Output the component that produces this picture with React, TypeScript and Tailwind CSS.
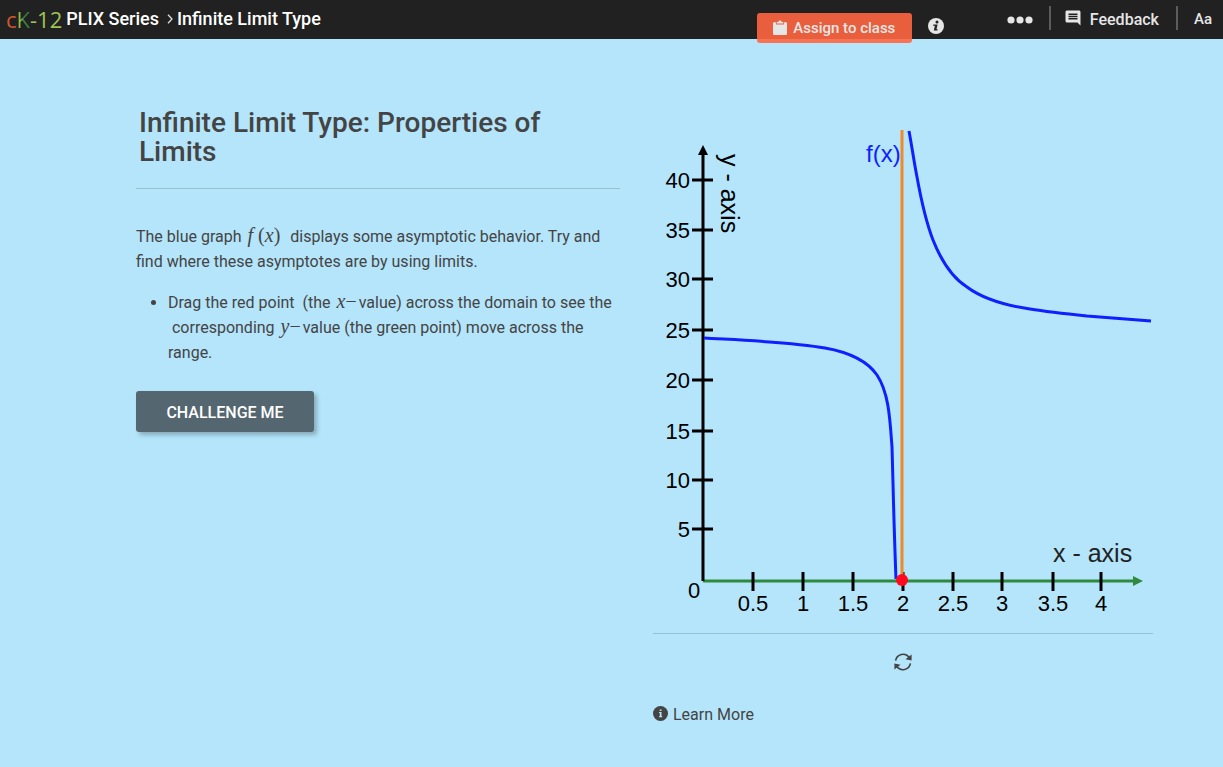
import { MdComment } from 'react-icons/md';

// Tick marks: label, position on the axis
const xTicks = [
    { label: '0.5', x: 100 },
    { label: '1', x: 150 },
    { label: '1.5', x: 200 },
    { label: '2', x: 250 },
    { label: '2.5', x: 300 },
    { label: '3', x: 349 },
    { label: '3.5', x: 400 },
    { label: '4', x: 448 },
];

const yTicks = [
    { label: '40', y: 50 },
    { label: '35', y: 100 },
    { label: '30', y: 149 },
    { label: '25', y: 200 },
    { label: '20', y: 250 },
    { label: '15', y: 301 },
    { label: '10', y: 350 },
    { label: '5', y: 399 },
];

function ClipboardIcon() {
    return (
        <svg viewBox="0 0 14 16" className="h-4 w-3.5" fill="currentColor" aria-hidden="true">
            <path d="M1 2.2h1.9v2.2h8.2V2.2H13a1 1 0 0 1 1 1V14a1 1 0 0 1-1 1H1a1 1 0 0 1-1-1V3.2a1 1 0 0 1 1-1z" />
            <path d="M3.7 3.6V2h1.5a1.85 1.85 0 0 1 3.6 0h1.5v1.6z" />
        </svg>
    );
}

function InfoIcon() {
    return (
        <svg viewBox="0 0 16 16" className="h-4 w-4" aria-hidden="true">
            <circle cx="8" cy="8" r="8" fill="#e6e6e6" />
            <circle cx="9" cy="4" r="1.5" fill="#212121" />
            <path d="M5.4 6.6h4.2L8.5 11.3h1.2l-.3 1.2H5.8l1.1-4.7H5.1z" fill="#212121" />
        </svg>
    );
}

function LearnMoreIcon() {
    return (
        <svg viewBox="0 0 15 15" className="h-[15px] w-[15px]" aria-hidden="true">
            <circle cx="7.5" cy="7.5" r="7.5" fill="#444" />
            <path d="M6.7 3.4h1.8v1.7H6.7zM6 6h2.5v4.3h.8v1H6v-1h.8V7H6z" fill="#b4e5fb" />
        </svg>
    );
}

function ResetIcon() {
    return (
        <svg viewBox="0 0 18 18" className="h-[18px] w-[18px]" aria-hidden="true">
            <path d="M1.6 7.6a7.6 7.6 0 0 1 13.6-3.2M16.4 10.4a7.6 7.6 0 0 1-13.6 3.2" fill="none" stroke="#444" strokeWidth="1.6" />
            <path d="M17.6 1.6v6l-6.2-1.4zM.4 16.4v-6l6.2 1.4z" fill="#444" />
        </svg>
    );
}

function Header() {
    return (
        <header className="flex h-[39px] items-start bg-[#212121] text-[#e6e6e6]">
            <nav aria-label="Breadcrumb" className="flex h-[38px] items-center pl-[6px] text-lg font-medium text-white">
                <a href="#" className="mr-1 font-[Open_Sans,sans-serif] text-[22px] font-normal text-[#9cc455]">
                    <span className="text-[#d2562e]">c</span>
                    <span className="bg-linear-to-r from-[#8fbf4d] from-30% to-[#3a8040] to-50% bg-clip-text text-transparent">K</span>
                    -12
                </a>
                <a href="#">PLIX Series</a>
                <svg viewBox="0 0 6 10" className="mr-1 ml-2 h-2.5 w-1.5" fill="none" stroke="#ddd" strokeWidth="1.3" aria-hidden="true">
                    <path d="M1 .7 5 5 1 9.3" />
                </svg>
                <span>Infinite Limit Type</span>
            </nav>

            <div className="ml-auto flex items-start">
                <button type="button" className="mt-[13px] flex h-[30px] w-[155px] items-center justify-center gap-1.5 rounded-[3px] bg-[#ff6640]/90 text-[15px] font-medium">
                    <ClipboardIcon />
                    Assign to class
                </button>
                <button type="button" aria-label="Information" className="mt-[18px] ml-4">
                    <InfoIcon />
                </button>
                <button type="button" aria-label="More" className="mt-4 ml-[63px]">
                    <svg viewBox="0 0 26 8" className="h-2 w-[26px]" fill="currentColor" aria-hidden="true">
                        <circle cx="4" cy="4" r="3.6" />
                        <circle cx="13" cy="4" r="3.6" />
                        <circle cx="22" cy="4" r="3.6" />
                    </svg>
                </button>
                <button type="button" className="mt-1.5 ml-4 flex h-6 items-center gap-2 border-l-2 border-[#5c5c5c] pl-[13px] font-medium">
                    <MdComment className="h-[18px] w-[18px]" />
                    <span className="pt-1">Feedback</span>
                </button>
                <button type="button" className="mt-1.5 mr-[11px] ml-[17px] h-6 border-l-2 border-[#5c5c5c] pt-0.5 pl-4 text-[15px] font-medium">
                    Aa
                </button>
            </div>
        </header>
    );
}

function Graph() {
    return (
        <svg viewBox="0 0 500 490" className="block w-full font-[Liberation_Sans,Arial,sans-serif]" role="img" aria-label="Graph of f(x)">
            {/* x axis */}
            <path d="M50 451H482" stroke="#2e8b3e" strokeWidth="3" />
            <path d="M480 446v10l10-5z" fill="#2e8b3e" />
            {xTicks.map(t => (
                <g key={t.label}>
                    <path d={`M${t.x} 442v19`} stroke="#000" strokeWidth="3" />
                    <text x={t.x} y="481" fontSize="22" textAnchor="middle">{t.label}</text>
                </g>
            ))}

            {/* y axis */}
            <path d="M50 451V22" stroke="#000" strokeWidth="3" />
            <path d="M45 25h10l-5-10z" />
            {yTicks.map(t => (
                <g key={t.label}>
                    <path d={`M39 ${t.y}h21`} stroke="#000" strokeWidth="3" />
                    <text x="37" y={t.y + 8} fontSize="22" textAnchor="end">{t.label}</text>
                </g>
            ))}
            <text x="41" y="468" fontSize="22" textAnchor="middle">0</text>

            <text x="400" y="432" fontSize="25" fill="#222">x - axis</text>
            <text transform="translate(68 24) rotate(90)" fontSize="25">y - axis</text>
            <text x="213" y="32" fontSize="24" fill="#0f1fff">f(x)</text>

            {/* both branches of f(x) */}
            <g fill="none" stroke="#0f1fff" strokeWidth="3">
                <path d="M51 208C85 210 140 212 172 218C200 223 215 232 224 245C236 263 237 290 239 317C240 350 241 400 243 449" />
                <path d="M256 1C259 17 261 32 264 47C268 69 273 92 280 110C288 130 298 147 314 157C330 169 350 175 377 179C396 182 415 184 434 186L498 191" />
            </g>

            {/* asymptote and draggable point */}
            <path d="M249 0V450" stroke="#f08a28" strokeWidth="3" />
            <circle cx="249" cy="450" r="6" fill="#ff0a1e" />
        </svg>
    );
}

function MathText({ children }: { children: React.ReactNode }) {
    return <span className="mx-0.5 font-[Liberation_Serif,Times_New_Roman,serif] text-xl leading-none">{children}</span>;
}

export default function App() {
    return (
        <div className="min-h-screen bg-[#b4e5fb] font-[Roboto,sans-serif] text-base text-[#444]">
            <Header />
            <main className="grid grid-cols-[484fr_500fr] items-start gap-[33px] pt-[69px] pr-[70px] pb-10 pl-[136px]">
                <section>
                    <h1 className="border-b border-[#9ac0d0] pb-[22px] pl-[3px] text-[28px] leading-[29px] font-medium">
                        Infinite Limit Type: Properties of Limits
                    </h1>
                    <p className="mt-[35px] leading-[25px]">
                        The blue graph <MathText><i>f</i> (<i>x</i>)</MathText>
                        &nbsp; displays some asymptotic behavior. Try and find where these asymptotes are by using limits.
                    </p>
                    <ul className="mt-4 list-disc pl-8 leading-[25px]">
                        <li>
                            Drag the red point &nbsp;(the <MathText><i>x</i>&minus;</MathText>value) across the domain to see the
                            {' '}&nbsp;corresponding <MathText><i>y</i>&minus;</MathText>value (the green point) move across the range.
                        </li>
                    </ul>
                    <button type="button" className="mt-[26px] h-[41px] w-[178px] rounded-[3px] bg-[#546670] pt-0.5 font-medium text-white shadow-[3px_3px_4px_rgba(0,0,0,0.25)]">
                        CHALLENGE ME
                    </button>
                </section>

                <section className="pt-[22px]">
                    <Graph />
                    <div className="mt-[13px] flex justify-center border-t border-[#9ac0d0] pt-[19px]">
                        <button type="button" aria-label="Reset">
                            <ResetIcon />
                        </button>
                    </div>
                    <a href="#" className="mt-8 inline-flex items-start gap-[5px] leading-6">
                        <span className="pt-[3px]">
                            <LearnMoreIcon />
                        </span>
                        Learn More
                    </a>
                </section>
            </main>
        </div>
    );
}
